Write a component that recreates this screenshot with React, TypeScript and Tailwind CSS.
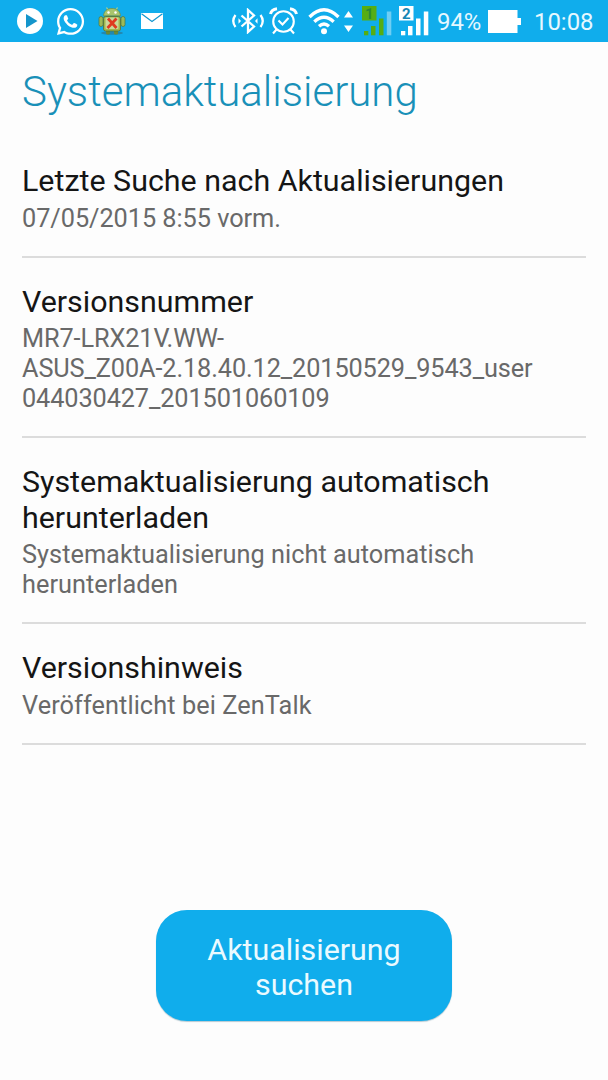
import { FaWhatsapp } from 'react-icons/fa'

const settings = [
  {
    title: ['Letzte Suche nach Aktualisierungen'],
    summary: ['07/05/2015 8:55 vorm.'],
    spacing: 'tracking-[-0.05px]',
  },
  {
    title: ['Versionsnummer'],
    summary: ['MR7-LRX21V.WW-', 'ASUS_Z00A-2.18.40.12_20150529_9543_user', '044030427_201501060109'],
    spacing: 'tracking-[-0.11px]',
  },
  {
    title: ['Systemaktualisierung automatisch', 'herunterladen'],
    summary: ['Systemaktualisierung nicht automatisch', 'herunterladen'],
    spacing: 'tracking-[0.03px]',
  },
  {
    title: ['Versionshinweis'],
    summary: ['Veröffentlicht bei ZenTalk'],
    spacing: 'tracking-[0.08px]',
  },
]

const PlayIcon = () => (
  <svg width="26" height="26" viewBox="0 0 26 26">
    <circle cx="13" cy="13" r="13" fill="#fff" />
    <path d="M9 6v14L20.5 13z" fill="#1495cb" />
  </svg>
)

const DroidIcon = () => (
  <svg width="28" height="30" viewBox="0 0 28 30">
    <ellipse cx="14" cy="27" rx="11" ry="1.8" fill="#2c7896" opacity=".7" />
    <path d="M8.5 1.5l2 3M19.5 1.5l-2 3" stroke="#b6d48b" strokeWidth="1.2" />
    <path d="M5.5 9.8C6 5 9 2.5 14 2.5s8 2.5 8.5 7.3z" fill="#a9c46c" stroke="#6e8c43" strokeWidth=".7" />
    <circle cx="10.5" cy="6.5" r="1.2" fill="#fff" />
    <circle cx="17.5" cy="6.5" r="1.2" fill="#fff" />
    <rect x="1" y="10.5" width="4" height="10" rx="2" fill="#9cba58" stroke="#54753a" strokeWidth=".7" />
    <rect x="23" y="10.5" width="4" height="10" rx="2" fill="#9cba58" stroke="#54753a" strokeWidth=".7" />
    <rect x="8" y="22" width="4" height="6.500" rx="1.5" fill="#6b8a35" />
    <rect x="16" y="22" width="4" height="6.500" rx="1.5" fill="#6b8a35" />
    <rect x="5.5" y="10.5" width="17" height="14.500" rx="2" fill="#9fb74f" stroke="#56702f" strokeWidth=".8" />
    <rect x="7.5" y="11.5" width="13" height="11.500" rx="1" fill="#cbd99a" />
    <path d="M10 12.500l8.500 9.500M18.500 12.500L9.500 22" stroke="#df3b20" strokeWidth="2.800" />
  </svg>
)

const MailIcon = () => (
  <svg width="22" height="16" viewBox="0 0 22 16">
    <rect width="22" height="16" fill="#fff" />
    <path d="M.5.8L11 8.500 21.500.8" fill="none" stroke="#1297cf" strokeWidth="1.200" />
  </svg>
)

const BluetoothIcon = () => (
  <svg width="32" height="26" viewBox="0 0 32 26" fill="none" stroke="#fff" strokeWidth="2.3">
    <path d="M9.500 7.500l12.500 11-6 5.500V2l6 5.500-12.500 11" />
    <path d="M3.500 7q-4.500 6 0 12M28.500 7q4.500 6 0 12" />
    <path d="M9 13l-2.500-2.800v5.600zM23 13l2.500-2.800v5.600z" fill="#fff" stroke="none" />
  </svg>
)

const AlarmIcon = () => (
  <svg width="29" height="28" viewBox="0 0 29 28" fill="none" stroke="#fff" strokeWidth="2.100">
    <circle cx="14.500" cy="14.500" r="10.300" />
    <path d="M1.500 7Q2.500 2.500 8 1.800M21 1.800Q26.500 2.500 27.500 7" strokeWidth="3" />
    <path d="M7.500 22.500l-3.500 4M21.500 22.500l3.500 4" />
    <path d="M9.500 13.500l4 4 6-6.500" />
  </svg>
)

const WifiIcon = () => (
  <svg width="32" height="28" viewBox="0 0 32 28" fill="none" stroke="#fff" strokeWidth="3.300">
    <path d="M1.500 10q14.500-14.500 29 0M6.300 14.700q9.700-9 19.400 0M11 19.300q5-4.500 10 0" />
    <circle cx="16" cy="24.300" r="3" fill="#fff" stroke="none" />
  </svg>
)

const DataArrows = () => (
  <svg width="9" height="21" viewBox="0 0 9 21" fill="#fff">
    <path d="M4.500 0L9 6.500H0zM4.500 21L9 14.500H0z" />
  </svg>
)

const SignalIcon = ({ sim, color, digit, last }: { sim: string; color: string; digit: string; last: number }) => (
  <svg width="30" height="30" viewBox="0 0 30 30" fill={color}>
    <rect width="14.500" height="14.500" />
    <rect x="2" y="25" width="4.300" height="4.300" />
    <rect x="9" y="20" width="4.500" height="9.300" />
    <rect x="17" y="12.500" width="4.500" height="16.800" />
    <rect x="24.800" y="5.500" width="4.500" height="23.800" fill="#fff" opacity={last} />
    <text x="7.200" y="12.700" textAnchor="middle" fontSize="15" fontWeight="700" fontFamily="Roboto, sans-serif" fill={digit}>
      {sim}
    </text>
  </svg>
)

const BatteryIcon = () => (
  <svg width="33" height="23" viewBox="0 0 33 23" fill="#fff">
    <path d="M0 0h29.500v8H33v7h-3.500v8H0z" />
  </svg>
)

const StatusBar = () => (
  <div className="flex h-[42px] items-center bg-[#10adec] pl-[17px] text-[23.900px] leading-none text-[#e6f8ff]">
    <PlayIcon />
    <FaWhatsapp className="ml-[12px] size-[31px] text-white" />
    <div className="ml-3">
      <DroidIcon />
    </div>
    <div className="ml-[15px]">
      <MailIcon />
    </div>
    <div className="ml-[69px]">
      <BluetoothIcon />
    </div>
    <div className="ml-[5px]">
      <AlarmIcon />
    </div>
    <div className="ml-[10px]">
      <WifiIcon />
    </div>
    <div className="ml-[4px]">
      <DataArrows />
    </div>
    <div className="ml-[9px]">
      <SignalIcon sim="1" color="#56ad13" digit="#2b8a35" last={0.4} />
    </div>
    <div className="ml-[7px]">
      <SignalIcon sim="2" color="#fff" digit="#1686b5" last={1} />
    </div>
    <span className="ml-[8px] w-[44px] whitespace-nowrap pt-[3px]">94%</span>
    <div className="ml-[7px]">
      <BatteryIcon />
    </div>
    <span className="ml-[13px] whitespace-nowrap pt-[3px]">10:08</span>
  </div>
)

const App = () => {
  return (
    <div className="flex h-[1080px] w-[608px] flex-col overflow-hidden bg-[#fdfdfd] font-['Roboto',sans-serif]">
      <StatusBar />

      {/* Header */}
      <header className="flex h-[95px] items-center px-[22px] pt-[5px]">
        <h1 className="text-[42px] leading-[50px] font-light text-[#1990b8]">Systemaktualisierung</h1>
      </header>

      {/* Settings list */}
      <ul className="px-[22px]">
        {settings.map((item) => (
          <li key={item.title[0]} className="border-b-2 border-[#dcdcdc] pt-[26px] pb-[22.300px]">
            <h2 className="text-[30.400px] leading-[35.500px] text-[#151515]">
              {item.title.map((line) => (
                <span key={line} className="block whitespace-nowrap">{line}</span>
              ))}
            </h2>
            <p className={`mt-[5px] text-[25.300px] leading-[29.900px] text-[#696969] ${item.spacing}`}>
              {item.summary.map((line) => (
                <span key={line} className="block whitespace-nowrap">{line}</span>
              ))}
            </p>
          </li>
        ))}
      </ul>

      <button className="mx-auto mt-auto mb-[59px] h-[111px] w-[296px] rounded-[31px] bg-[#10adec] px-10 pt-[3px] text-[30.400px] leading-[35.500px] text-[#eafaff] shadow-[0_1px_1px_#b5c9d2]">
        Aktualisierung suchen
      </button>
    </div>
  )
}

export default App
